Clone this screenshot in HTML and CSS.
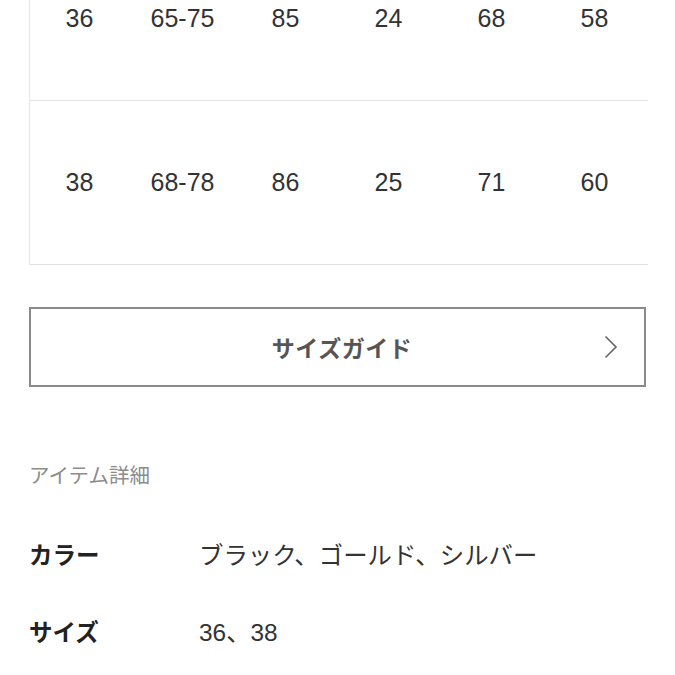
FILE: index.html
```html
<!DOCTYPE html>
<html lang="ja">
<head>
<meta charset="utf-8">
<title>サイズ</title>
<link rel="stylesheet" href="styles.css">
</head>
<body>
<div class="page">
  <div class="size-table">
    <div class="row">
      <span>36</span><span>65-75</span><span>85</span><span>24</span><span>68</span><span>58</span>
    </div>
    <div class="row">
      <span>38</span><span>68-78</span><span>86</span><span>25</span><span>71</span><span>60</span>
    </div>
  </div>

  <a class="guide-btn" href="#">
    <span class="guide-label">サイズガイド</span>
    <svg class="chevron" width="14" height="24" viewBox="0 0 14 24"><polyline points="1.5,1.5 12,12 1.5,22.5" fill="none" stroke="#666" stroke-width="1.6"/></svg>
  </a>

  <h2 class="section-title">アイテム詳細</h2>
  <dl class="details">
    <div class="detail-row"><dt>カラー</dt><dd>ブラック、ゴールド、シルバー</dd></div>
    <div class="detail-row"><dt>サイズ</dt><dd>36、38</dd></div>
  </dl>
</div>
</body>
</html>
```
FILE: styles.css
```css
html, body {
  margin: 0;
  padding: 0;
  background: #fff;
}
body {
  font-family: "Liberation Sans", "Noto Sans CJK JP", sans-serif;
  color: #333;
  overflow: hidden;
}
.page {
  margin-top: -63px;
  padding: 0 29px 0 29px;
}
.size-table {
  border-left: 1px solid #e6e6e6;
  margin-right: -2px;
}
.row {
  display: grid;
  grid-template-columns: repeat(6, 1fr);
  height: 163px;
  align-items: center;
  border-bottom: 1px solid #e2e2e2;
}
.row span {
  text-align: center;
  font-size: 25px;
  color: #333;
  padding-right: 4px;
}
.guide-btn {
  margin-top: 42px;
  height: 76px;
  border: 2px solid #8a8a8a;
  display: flex;
  align-items: center;
  justify-content: center;
  position: relative;
  text-decoration: none;
  padding-left: 9px;
}
.guide-label {
  font-family: "Noto Sans CJK JP", sans-serif;
  font-weight: bold;
  font-size: 23px;
  color: #555;
  letter-spacing: 0.5px;
}
.chevron {
  position: absolute;
  right: 26px;
  top: 26px;
}
.section-title {
  margin: 72px 0 0;
  font-family: "Noto Sans CJK JP", sans-serif;
  font-weight: normal;
  font-size: 20.5px;
  line-height: 30px;
  color: #8c8c8c;
}
.details {
  margin: 26px 0 0;
}
.detail-row {
  display: flex;
  align-items: center;
  height: 77px;
}
.detail-row dt {
  width: 170px;
  font-family: "Noto Sans CJK JP", sans-serif;
  font-weight: bold;
  font-size: 23.5px;
  color: #222;
}
.detail-row dd {
  margin: 0;
  font-size: 24.4px;
  color: #333;
}
```
